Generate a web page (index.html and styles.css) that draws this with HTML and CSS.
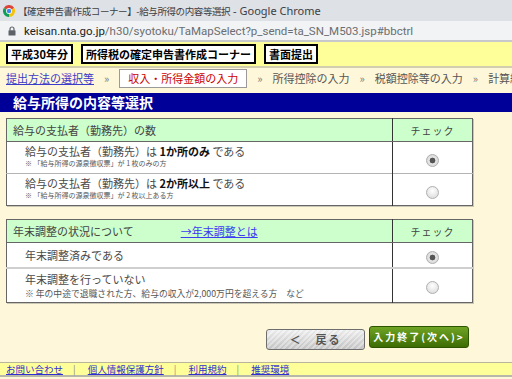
FILE: index.html
```html
<!DOCTYPE html>
<html lang="ja">
  <head>
    <meta charset="UTF-8" />
    <meta name="viewport" content="width=device-width, initial-scale=1.0" />
    <title>給与所得の内容等選択</title>
    <link rel="stylesheet" href="styles.css">
  </head>
  <body>
    <div class="chrome-title">
      <svg class="favicon" viewBox="0 0 12 12">
        <path d="M6 6 L0.8 3 A6 6 0 0 1 11.2 3 Z" fill="#db4437" />
        <path d="M6 6 L11.2 3 A6 6 0 0 1 6 12 Z" fill="#f4c20d" />
        <path d="M6 6 L6 12 A6 6 0 0 1 0.8 3 Z" fill="#0f9d58" />
        <circle cx="6" cy="6" r="2.9" fill="#fff" />
        <circle cx="6" cy="6" r="2.2" fill="#4285f4" />
      </svg>
      <span class="tab-title"><span class="jp">【確定申告書作成コーナー】-給与所得の内容等選択</span> - Google Chrome</span>
    </div>
    <div class="chrome-address">
      <svg class="lock" viewBox="0 0 8 10">
        <path d="M2 4.5 V3 a2 2 0 0 1 4 0 V4.5" fill="none" stroke="#5f6368" stroke-width="1.2" />
        <rect x="0.5" y="4.3" width="7" height="5.2" rx="0.6" fill="#5f6368" />
      </svg>
      <span class="url"><span class="host">keisan.nta.go.jp</span>/h30/syotoku/TaMapSelect?p_send=ta_SN_M503.jsp#bbctrl</span>
    </div>

    <div class="top-bar">
      <span class="tag">平成30年分</span>
      <span class="tag">所得税の確定申告書作成コーナー</span>
      <span class="tag">書面提出</span>
    </div>

    <div class="steps">
      <a class="step-link" href="#">提出方法の選択等</a>
      <span class="sep">»</span>
      <span class="step current">収入・所得金額の入力</span>
      <span class="sep">»</span>
      <span class="step">所得控除の入力</span>
      <span class="sep">»</span>
      <span class="step">税額控除等の入力</span>
      <span class="sep">»</span>
      <span class="step">計算結果の確認</span>
    </div>

    <h1 class="page-title">給与所得の内容等選択</h1>

    <table class="choice">
      <tr>
        <th class="label">給与の支払者（勤務先）の数</th>
        <th class="check">チェック</th>
      </tr>
      <tr class="row-tall">
        <td class="item">
          <div class="main">給与の支払者（勤務先）は <b>1か所のみ</b> である</div>
          <div class="note">※ 「給与所得の源泉徴収票」が 1 枚のみの方</div>
        </td>
        <td class="radio-cell"><input class="radio" type="radio" name="count" checked></td>
      </tr>
      <tr class="row-tall">
        <td class="item">
          <div class="main">給与の支払者（勤務先）は <b>2か所以上</b> である</div>
          <div class="note">※ 「給与所得の源泉徴収票」が 2 枚以上ある方</div>
        </td>
        <td class="radio-cell"><input class="radio" type="radio" name="count"></td>
      </tr>
    </table>

    <table class="choice second">
      <tr>
        <th class="label">年末調整の状況について<a class="help-link" href="#">→年末調整とは</a></th>
        <th class="check">チェック</th>
      </tr>
      <tr class="row-short">
        <td class="item"><div class="main">年末調整済みである</div></td>
        <td class="radio-cell"><input class="radio" type="radio" name="adjust" checked></td>
      </tr>
      <tr class="row-note">
        <td class="item">
          <div class="main">年末調整を行っていない</div>
          <div class="note wide">※ 年の中途で退職された方、給与の収入が2,000万円を超える方　など</div>
        </td>
        <td class="radio-cell"><input class="radio" type="radio" name="adjust"></td>
      </tr>
    </table>

    <div class="actions">
      <button class="btn back">＜　戻る</button>
      <button class="btn next">入力終了(次へ)&gt;</button>
    </div>

    <div class="footer">
      <a href="#">お問い合わせ</a><span class="bar">|</span>
      <a href="#">個人情報保護方針</a><span class="bar">|</span>
      <a href="#">利用規約</a><span class="bar">|</span>
      <a href="#">推奨環境</a>
    </div>
  </body>
</html>
```

FILE: styles.css
```css
* {
  box-sizing: border-box;
}
body {
  margin: 0;
  width: 512px;
  height: 379px;
  overflow: hidden;
  background: #fff7d9;
  font-family: "Noto Sans CJK JP", sans-serif;
  color: #444;
}

/* browser chrome */
.chrome-title {
  height: 21px;
  background: #dee1e6;
  display: flex;
  align-items: center;
  gap: 3px;
  padding-left: 3px;
  white-space: nowrap;
  font-family: "Noto Sans", "Noto Sans CJK JP", sans-serif;
  font-size: 11px;
  color: #3c4043;
}
.favicon {
  width: 12px;
  height: 12px;
}
.tab-title .jp {
  font-family: "Noto Sans CJK JP", sans-serif;
  font-size: 9.5px;
  letter-spacing: -0.4px;
}
.chrome-address {
  height: 21px;
  background: #f1f3f4;
  border-bottom: 2px solid #c8c9cc;
  display: flex;
  align-items: center;
  gap: 8px;
  padding-left: 8px;
  white-space: nowrap;
  font-family: Roboto, sans-serif;
  font-size: 11.5px;
  color: #6b6e72;
}
.lock {
  width: 8px;
  height: 10px;
}
.host {
  color: #202124;
}

/* site header */
.top-bar {
  background: #ffff99;
  display: flex;
  gap: 8px;
  padding: 2px 6px;
  border-bottom: 2px solid #d2cfae;
}
.tag {
  background: #fff;
  border: 2px solid #000;
  color: #000;
  font-weight: bold;
  font-size: 11px;
  line-height: 16px;
  padding: 0 3px;
}
.steps {
  height: 25px;
  display: flex;
  align-items: flex-start;
  padding: 1px 0 0 6px;
  white-space: nowrap;
  overflow: hidden;
  font-size: 11px;
  line-height: 19px;
}
.step-link {
  color: #3c3cc8;
}
.step {
  color: #555;
}
.step.current {
  background: #fff;
  border: 1px solid #9a9a9a;
  color: #cc0000;
  padding: 0 8px;
  line-height: 17px;
}
.sep {
  color: #777;
  margin: 0 10px;
}
.page-title {
  margin: 0;
  height: 19px;
  background: #000099;
  color: #fff;
  font-size: 14px;
  line-height: 19px;
  padding-left: 13px;
}

/* tables */
.choice {
  width: 467px;
  margin: 6px 0 0 6px;
  border-collapse: collapse;
  border: 1px solid #666;
  background: #fff;
  box-shadow: 1px 1px 0 #c9c6b4;
}
.choice.second {
  margin-top: 13px;
}
.choice th {
  height: 23px;
  background: #ccffcc;
  font-weight: normal;
  font-size: 11px;
  color: #444;
  text-align: left;
  padding: 0 0 0 6px;
  border-bottom: 1px solid #666;
}
.choice th.check {
  width: 80px;
  text-align: center;
  padding: 0;
  font-size: 10px;
  letter-spacing: 1px;
}
.check,
.radio-cell {
  border-left: 1px solid #333;
}
.help-link {
  color: #3c3cf0;
  margin-left: 47px;
}
.choice td {
  padding: 0;
  border-top: 1px solid #b4b4b4;
}
.row-tall td {
  height: 32px;
}
.row-tall .item {
  padding-bottom: 3px !important;
}
.row-short td {
  height: 25px;
}
.row-note td {
  height: 34px;
  border-top: 2px solid #cfcfcf;
}
.item {
  padding-left: 18px !important;
}
.main {
  font-size: 11px;
  line-height: 14px;
  color: #4a4a4a;
}
.main b {
  color: #111;
}
.note {
  font-size: 7px;
  line-height: 10px;
  color: #555;
}
.note.wide {
  font-size: 8.8px;
  line-height: 11px;
  margin-top: 2px;
}
.radio-cell {
  text-align: center;
  vertical-align: middle;
}
.radio {
  appearance: none;
  width: 13px;
  height: 13px;
  margin: 0;
  border-radius: 50%;
  border: 1px solid #b0b0b0;
  background: radial-gradient(circle at 50% 35%, #fff, #d6d6d6);
  vertical-align: middle;
}
.radio:checked {
  background: radial-gradient(circle, #555 0 2.6px, #e6e6e6 3.2px, #cfcfcf);
}

/* buttons */
.actions {
  width: 473px;
  margin-top: 23px;
  display: flex;
  justify-content: flex-end;
  align-items: flex-start;
  gap: 4px;
  padding-right: 4px;
}
.btn {
  font-family: "Noto Sans CJK JP", sans-serif;
  font-weight: bold;
  border-radius: 3px;
  padding: 0;
}
.back {
  width: 99px;
  height: 21px;
  margin-top: 3px;
  border: 1px solid #6e6e6e;
  background:
    repeating-linear-gradient(135deg, rgba(255, 255, 255, 0.25) 0 2px, rgba(0, 0, 0, 0.03) 2px 4px),
    linear-gradient(#f2f2f2, #c9c9c9);
  color: #555;
  font-size: 11px;
  letter-spacing: 2px;
}
.next {
  width: 100px;
  height: 22px;
  border: 1px solid #2f5400;
  background: linear-gradient(#6ea424, #3d6c05);
  color: #fff;
  font-size: 10px;
  letter-spacing: 2px;
}

/* footer */
.footer {
  margin-top: 12px;
  background: #ffff99;
  border-top: 1px solid #b8b59c;
  border-bottom: 2px solid #b8b8aa;
  height: 15px;
  padding-left: 6px;
  font-size: 9.5px;
  line-height: 12px;
  white-space: nowrap;
}
.footer a {
  color: #3030d0;
}
.bar {
  color: #888;
  margin: 0 10px;
}
```
